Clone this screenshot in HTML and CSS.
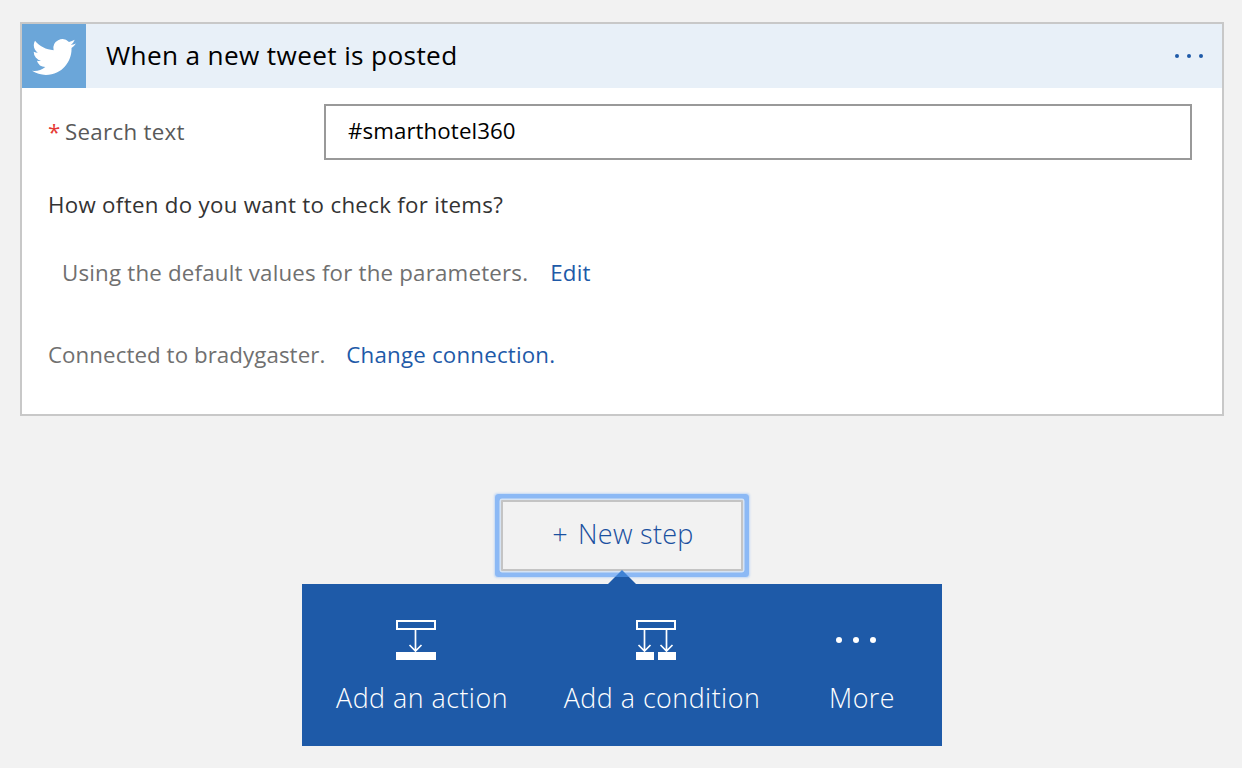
FILE: index.html
```html
<!DOCTYPE html>
<html lang="en">
<head>
<meta charset="utf-8">
<title>When a new tweet is posted</title>
<link rel="stylesheet" href="styles.css">
</head>
<body>
<section class="card">
  <header class="card-head">
    <div class="brand">
      <svg class="bird" viewBox="0 0 24 24" aria-hidden="true"><path d="M23.95 4.57a10 10 0 0 1-2.82.77 4.96 4.96 0 0 0 2.16-2.72c-.95.55-2 .95-3.12 1.18a4.92 4.92 0 0 0-8.38 4.48C7.69 8.09 4.07 6.13 1.64 3.16a4.82 4.82 0 0 0-.67 2.48c0 1.71.87 3.21 2.19 4.1a4.9 4.9 0 0 1-2.23-.62v.06a4.92 4.92 0 0 0 3.95 4.83 5 5 0 0 1-2.21.08 4.94 4.94 0 0 0 4.6 3.42A9.87 9.87 0 0 1 0 19.54a14 14 0 0 0 7.56 2.21c9.05 0 14-7.5 14-13.98 0-.21 0-.42-.02-.63a9.94 9.94 0 0 0 2.41-2.57z"/></svg>
    </div>
    <h1 class="card-title">When a new tweet is posted</h1>
    <div class="dots dots-blue"><i></i><i></i><i></i></div>
  </header>
  <div class="card-body">
    <div class="field">
      <label class="field-label"><span class="req">*</span>Search text</label>
      <div class="input">#smarthotel360</div>
    </div>
    <p class="question">How often do you want to check for items?</p>
    <p class="defaults">Using the default values for the parameters.<a class="link link-edit" href="#">Edit</a></p>
    <p class="connection">Connected to bradygaster.<a class="link link-change" href="#">Change connection.</a></p>
  </div>
</section>
<div class="step-wrap">
  <button class="new-step" type="button"><span class="plus">+</span>New step</button>
  <span class="caret"></span>
  <nav class="panel">
    <a class="panel-item item-action" href="#">
      <svg class="panel-icon" viewBox="0 0 40 40" aria-hidden="true">
        <rect x="1" y="1" width="38" height="8" fill="none" stroke="#fff" stroke-width="2"/>
        <rect y="32" width="40" height="8" fill="#fff"/>
        <path d="M19.500 9v22M13.500 25l6 6 6-6" fill="none" stroke="#fff" stroke-width="1.700"/>
      </svg>
      <span>Add an action</span>
    </a>
    <a class="panel-item item-condition" href="#">
      <svg class="panel-icon" viewBox="0 0 40 40" aria-hidden="true">
        <rect x="1" y="1" width="38" height="8" fill="none" stroke="#fff" stroke-width="2"/>
        <rect y="32" width="18" height="8" fill="#fff"/>
        <rect x="22" y="32" width="18" height="8" fill="#fff"/>
        <path d="M8.500 9v22M2.500 25l6 6 6-6M30.500 9v22M24.500 25l6 6 6-6" fill="none" stroke="#fff" stroke-width="1.700"/>
      </svg>
      <span>Add a condition</span>
    </a>
    <a class="panel-item item-more" href="#">
      <span class="panel-icon more-icon"><span class="dots dots-white"><i></i><i></i><i></i></span></span>
      <span>More</span>
    </a>
  </nav>
</div>
</body>
</html>
```
FILE: styles.css
```css
* { box-sizing: border-box; }
html, body { margin: 0; height: 768px; overflow: hidden; }
body {
  background: #f2f2f2;
  font-family: "Open Sans", "Noto Sans", sans-serif;
  padding: 22px 18px 0 20px;
  color: #666;
}
p, h1 { margin: 0; font-weight: 400; }
a { text-decoration: none; }

.card {
  height: 394px;
  background: #fff;
  border: 2px solid #c8c8c8;
}
.card-head {
  display: flex;
  align-items: center;
  height: 64px;
  background: #e8f0f8;
}
.brand {
  width: 64px;
  height: 64px;
  background: #6ba6d9;
  display: flex;
  align-items: center;
  justify-content: center;
}
.bird { width: 44px; height: 44px; margin-top: 1px; fill: #fff; }
.card-title {
  margin: -2px 0 0 20px;
  flex: 1;
  font-size: 26.200px;
  letter-spacing: 0.35px;
  line-height: 36px;
  color: #000;
}
.dots { display: flex; }
.dots i { display: block; border-radius: 50%; }
.dots-blue { gap: 8px; margin-right: 19px; }
.dots-blue i { width: 4px; height: 4px; background: #1e5aa8; }
.dots-white { gap: 11px; }
.dots-white i { width: 6px; height: 6px; background: #fff; }

.card-body { padding: 16px 30px 0 26px; font-size: 22.300px; letter-spacing: 0.3px; }
.field { display: flex; align-items: center; height: 56px; }
.field-label { width: 276px; margin-top: -2px; color: #595959; display: flex; align-items: center; }
.req { color: #e53935; width: 17px; }
.input {
  flex: 1;
  height: 56px;
  border: 2px solid #999;
  padding-left: 22px;
  letter-spacing: 0.08px;
  line-height: 50px;
  color: #000;
}
.question { margin-top: 27px; line-height: 36px; color: #333; }
.defaults { margin-top: 32px; margin-left: 14px; letter-spacing: 0.2px; line-height: 36px; color: #707070; }
.connection { margin-top: 46px; letter-spacing: 0.07px; line-height: 36px; color: #707070; }
.link { color: #1e5aa8; }
.link-edit { margin-left: 22px; }
.link-change { margin-left: 21px; letter-spacing: 0.2px; }

.step-wrap {
  position: relative;
  display: flex;
  flex-direction: column;
  align-items: center;
  width: 640px;
  margin: 84px 0 0 282px;
}
.new-step {
  display: block;
  width: 242px;
  height: 71px;
  background: #f2f2f2;
  border: 2px solid #c4c4c4;
  border-radius: 1px;
  outline: none;
  box-shadow: 0 0 0 1.500px #d6e3f3, 0 0 0 6px #8cb9f5, 0 0 2px 7px #c4d9f5;
  font: inherit;
  font-size: 27px;
  font-weight: 300;
  letter-spacing: 0.3px;
  color: #1a50a0;
  padding: 0 0 4px 2px;
}
.plus { margin-right: 10px; }
.caret {
  position: absolute;
  left: 306px;
  top: 70px;
  width: 28px;
  height: 14px;
  background: linear-gradient(#3f82d4 0, #3f82d4 7px, #1e5aa8 7px);
  clip-path: polygon(50% 0, 100% 100%, 0 100%);
}
.panel {
  margin-top: 13px;
  width: 640px;
  height: 162px;
  background: #1e5aa8;
  display: flex;
  color: #fff;
}
.panel-item {
  display: flex;
  flex-direction: column;
  align-items: center;
  color: #fff;
  font-size: 26.800px;
  font-weight: 300;
  letter-spacing: 0.5px;
  line-height: 36px;
  padding-top: 36px;
}
.panel-icon { display: block; width: 40px; height: 40px; margin: 0 12px 20px 0; }
.item-action { width: 240px; }
.item-condition { width: 240px; }
.item-more { width: 160px; }
.more-icon { display: flex; align-items: center; justify-content: center; }
```
